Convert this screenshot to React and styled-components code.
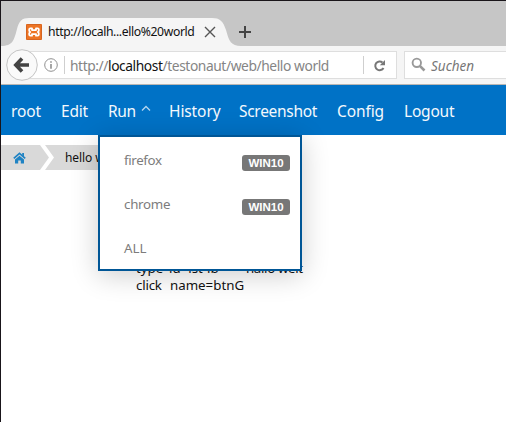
import React from 'react';
import styled, { createGlobalStyle } from 'styled-components';

const Global = createGlobalStyle`
  * { box-sizing: border-box; }
  body { margin: 0; background: #fff; overflow: hidden; }
`;

const Window = styled.div`
  width: 506px;
  height: 422px;
  border-top: 1px solid #19151a;
  border-left: 1px solid #19151a;
  background: #fff;
  font-family: "Noto Sans", "Open Sans", sans-serif;
  display: flex;
  flex-direction: column;
  overflow: hidden;
`;

const Text = styled.span`
  font-size: ${(p) => p.$size || 14}px;
  letter-spacing: ${(p) => p.$track || 0}px;
  color: ${(p) => p.$color || 'inherit'};
  line-height: 1;
  white-space: pre;
`;

const TabStrip = styled.div`
  height: 45px;
  flex: none;
  display: flex;
  align-items: flex-end;
  background: #c6c6c6;
`;

const Tab = styled.div`
  width: 240px;
  height: 28px;
  display: flex;
  position: relative;
`;

const TabShape = styled.svg`
  position: absolute;
  inset: 0;
`;

const TabContent = styled.div`
  position: relative;
  display: flex;
  align-items: center;
  width: 100%;
  padding-left: 25px;
`;

const Favicon = styled.svg`
  flex: none;
  margin-right: 6px;
`;

const TabTitle = styled(Text)`
  width: 156px;
  flex: none;
`;

const NewTab = styled.svg`
  margin: 0 0 7px -3px;
`;

const Toolbar = styled.div`
  height: 39px;
  flex: none;
  display: flex;
  background: #f5f5f5;
  border-bottom: 1px solid #b9b6b3;
  padding: 5px 0 0 5px;
`;

const Back = styled.svg`
  flex: none;
  margin-top: -2px;
  z-index: 1;
`;

const UrlBar = styled.div`
  width: 376px;
  height: 28px;
  margin-left: -17px;
  flex: none;
  display: flex;
  align-items: center;
  background: #fff;
  border: 1px solid #dedede;
  padding-left: 22px;
`;

const InfoIcon = styled.svg`
  flex: none;
  margin-right: 6px;
`;

const Divider = styled.i`
  width: 1px;
  height: 18px;
  flex: none;
  background: #cfcfcf;
`;

const Url = styled(Text)`
  width: 298px;
  padding: 2px 0 0 5px;
  flex: none;
`;

const Host = styled.span`
  color: #111;
`;

const Reload = styled.svg`
  flex: none;
  margin-left: 9px;
`;

const Search = styled.div`
  flex: 1;
  height: 28px;
  margin-left: 7px;
  background: #fff;
  border: 1px solid #dedede;
  border-right: 0;
  display: flex;
  align-items: center;
  padding-left: 6px;
`;

const SearchIcon = styled.svg`
  flex: none;
  margin-bottom: 1px;
`;

const SearchHint = styled(Text)`
  font-style: italic;
  margin: 3px 0 0 5px;
`;

const Navigation = styled.nav`
  height: 50px;
  flex: none;
  display: flex;
  align-items: center;
  background: #0072c6;
  color: #f4f9fd;
  padding: 3px 0 0 10px;
  position: relative;
`;

const NavItem = styled.div`
  width: ${(p) => p.$width}px;
  flex: none;
  display: flex;
  align-items: center;
`;

const Caret = styled.svg`
  margin: -7px 0 0 5px;
`;

const Menu = styled.div`
  position: absolute;
  z-index: 2;
  left: 97px;
  top: 50px;
  width: 204px;
  height: 136px;
  padding: 2px 10px 0 24px;
  background: #fff;
  border: 2px solid #005696;
  box-shadow: 0 4px 26px rgba(0, 0, 0, 0.2);
`;

const MenuItem = styled.div`
  height: 44px;
  display: flex;
  align-items: center;
  justify-content: space-between;
`;

const Badge = styled.span`
  width: 48px;
  height: 16px;
  margin-top: 4px;
  border-radius: 3px;
  background: #777;
  color: #fff;
  font: bold 11.5px/17px "Liberation Sans", Arial, sans-serif;
  text-align: center;
`;

const Trail = styled.div`
  height: 25px;
  margin-top: 10px;
  flex: none;
  display: flex;
`;

const HomeCrumb = styled.div`
  width: 49px;
  display: flex;
  align-items: center;
  padding-left: 12px;
  background: #d9d9d9;
  clip-path: polygon(0 0, 39px 0, 48px 50%, 39px 100%, 0 100%);
`;

const PageCrumb = styled.div`
  width: 100px;
  margin-left: -6px;
  display: flex;
  align-items: center;
  padding: 1px 0 0 21px;
  background: #d9d9d9;
  clip-path: polygon(1px 0, 100% 0, 100% 100%, 1px 100%, 10px 50%);
`;

const Steps = styled.div`
  margin: 90px 0 0 135px;
  color: #111;
`;

const Step = styled.div`
  height: 17px;
  display: flex;
  align-items: center;
`;

const Cell = styled(Text)`
  width: ${(p) => p.$width}px;
  flex: none;
`;

const links = [
  ['root', 50, -0.1],
  ['Edit', 47, -0.2],
  ['Run', 61, -0.3],
  ['History', 70, -0.1],
  ['Screenshot', 98, -0.3],
  ['Config', 67, -0.1],
  ['Logout', 60, -0.2],
];

const targets = [
  ['firefox', 'WIN10', -0.35],
  ['chrome', 'WIN10', -0.25],
  ['ALL', null, 0],
];

export default function App() {
  return (
    <>
      <Global />
      <Window>
        <TabStrip>
          <Tab>
            <TabShape width="240" height="28" viewBox="0 0 240 28">
              <path d="M0 28C12 28 13 22 16 11C18 3 21 0 28 0H211C219 0 222 3 225 12C228 23 230 28 240 28Z" fill="#f5f5f5" />
            </TabShape>
            <TabContent>
              <Favicon width="16" height="16" viewBox="0 0 16 16">
                <rect width="16" height="16" rx="1" fill="#ed7424" />
                <rect x=".5" y=".5" width="15" height="15" rx="1" fill="none" stroke="#d56420" />
                <path d="M6 6.1V4.3H4.3Q3.2 4.3 3.2 5.4V6.4Q3.2 7.4 4.2 8Q3.2 8.6 3.2 9.6V10.6Q3.2 11.7 4.3 11.7H6V10.2H10V11.7H11.7Q12.8 11.7 12.8 10.6V9.6Q12.8 8.6 11.8 8Q12.8 7.4 12.8 6.4V5.4Q12.8 4.3 11.7 4.3H10V6.1Z" fill="none" stroke="#fff" strokeWidth="1.8" strokeLinejoin="round" />
              </Favicon>
              <TabTitle $size={12.2} $track={-0.38} $color="#111">http://localh...ello%20world</TabTitle>
              <svg width="12" height="12" viewBox="0 0 12 12">
                <path d="M1 1L11 11M11 1L1 11" stroke="#555" strokeWidth="1.4" />
              </svg>
            </TabContent>
          </Tab>
          <NewTab width="14" height="14" viewBox="0 0 14 14">
            <path d="M7 1V13M1 7H13" stroke="#444" strokeWidth="2" />
          </NewTab>
        </TabStrip>
        <Toolbar>
          <Back width="32" height="32" viewBox="0 0 32 32">
            <circle cx="16" cy="16" r="15.3" fill="#fafafa" stroke="#c4c4c4" />
            <path d="M16 9.5L9.8 16L16 22.5M10 16H23" fill="none" stroke="#444" strokeWidth="3.6" />
          </Back>
          <UrlBar>
            <InfoIcon width="14" height="14" viewBox="0 0 14 14">
              <circle cx="7" cy="7" r="6.3" fill="none" stroke="#909090" />
              <path d="M7 3.2V4.8M7 6V10.8" stroke="#808080" strokeWidth="1.4" />
            </InfoIcon>
            <Divider />
            <Url $size={13.8} $track={-0.42} $color="#858585">
              http://<Host>localhost</Host>/testonaut/web/hello world
            </Url>
            <Divider />
            <Reload width="13" height="13" viewBox="0 0 13 13">
              <path d="M10.5 9A4.4 4.4 0 1 1 9.5 3.4" fill="none" stroke="#777" strokeWidth="2" />
              <path d="M12 1V6.2H6.8Z" fill="#777" />
            </Reload>
          </UrlBar>
          <Search>
            <SearchIcon width="15" height="15" viewBox="0 0 15 15">
              <circle cx="5.8" cy="5.8" r="4.2" fill="none" stroke="#999" strokeWidth="1.9" />
              <path d="M8.8 8.8L13.5 13.5" stroke="#999" strokeWidth="2.6" />
            </SearchIcon>
            <SearchHint $size={13.5} $color="#777">Suchen</SearchHint>
          </Search>
        </Toolbar>
        <Navigation>
          {links.map(([label, width, track]) => (
            <NavItem key={label} $width={width}>
              <Text $size={15.5} $track={track}>{label}</Text>
              {label === 'Run' && (
                <Caret width="10" height="7" viewBox="0 0 10 7">
                  <path d="M1 5.5L5 1.5L9 5.5" fill="none" stroke="#b5d6ef" strokeWidth="1.3" />
                </Caret>
              )}
            </NavItem>
          ))}
          <Menu>
            {targets.map(([name, platform, track]) => (
              <MenuItem key={name}>
                <Text $size={13.3} $track={track} $color="#7c7c7c">{name}</Text>
                {platform && <Badge>{platform}</Badge>}
              </MenuItem>
            ))}
          </Menu>
        </Navigation>
        <Trail>
          <HomeCrumb>
            <svg width="13" height="12" viewBox="0 0 13 12">
              <path d="M.8 6.4L6.5 1.3L12.2 6.4" fill="none" stroke="#1f83c4" strokeWidth="1.7" />
              <path d="M2 7.6L6.5 3.8L11 7.6V11.5H7.8V8.6H5.2V11.5H2Z" fill="#1f83c4" />
              <path d="M9.2 1H11V4.5L9.2 3Z" fill="#1f83c4" />
            </svg>
          </HomeCrumb>
          <PageCrumb><Text $size={12} $track={-0.1} $color="#111">hello world</Text></PageCrumb>
        </Trail>
        <Steps>
          <Step>
            <Cell $size={13.3} $width={33}>type</Cell>
            <Cell $size={13.3} $width={77}>id=lst-ib</Cell>
            <Text $size={13.3} $track={-0.35}>hallo welt</Text>
          </Step>
          <Step>
            <Cell $size={13.3} $track={-0.2} $width={34}>click</Cell>
            <Text $size={13.3}>name=btnG</Text>
          </Step>
        </Steps>
      </Window>
    </>
  );
}
